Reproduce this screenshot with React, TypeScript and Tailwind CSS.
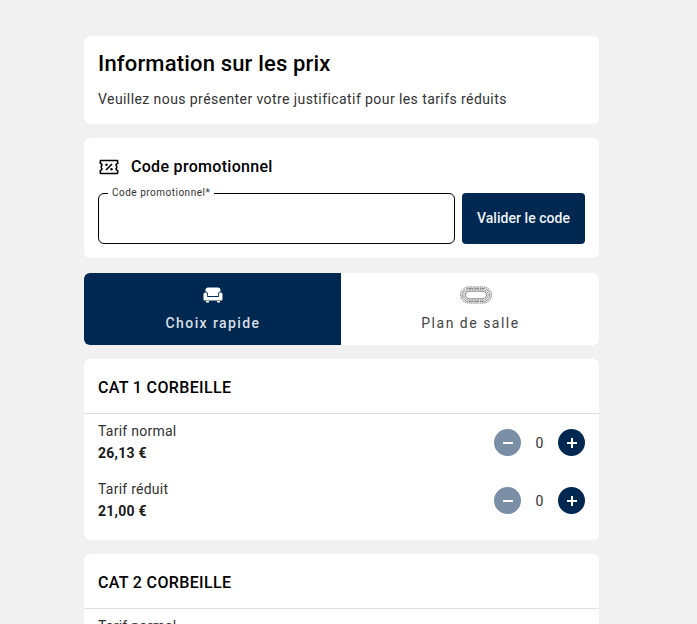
import React from 'react';

const Ticket = () => (
  <svg width="20" height="16" viewBox="0 0 20 16" fill="none" stroke="#000" strokeWidth="1.6">
    <path d="M1.500 1.500h17l.3 2.800c-1.200.4-1.800 1.200-1.800 1.900 1 .5 1 3.100 0 3.600 0 .7.600 1.500 1.800 1.900l-.3 2.800h-17l-.3-2.800c1.200-.4 1.800-1.200 1.800-1.900-1-.5-1-3.100 0-3.600 0-.7-.6-1.500-1.800-1.900z" strokeLinejoin="round" />
    <path d="M7 11l6-6" />
    <circle cx="7.500" cy="5.800" r="1.200" fill="#000" stroke="none" />
    <circle cx="12.500" cy="10.200" r="1.200" fill="#000" stroke="none" />
  </svg>
);

const Armchair = () => (
  <svg width="20" height="16" viewBox="0 0 20 16" fill="#fff">
    <path d="M5 .5h10c1.500 0 2.500 1 2.500 2.500v1.500c-1.500.2-2.500 1.400-2.500 2.800V9H5V7.300C5 5.900 4 4.700 2.500 4.500V3C2.500 1.500 3.500.5 5 .5z" />
    <path d="M.5 7.300C.5 6.100 1.500 5.500 2.500 5.500c1.200 0 1.700 1 1.700 2v2.500h11.600V7.500c0-1 .5-2 1.700-2 1 0 2 .6 2 1.800v5c0 .8-.6 1.300-1.300 1.300H1.800c-.7 0-1.300-.5-1.300-1.300z" />
    <rect x="3" y="14" width="3" height="1.500" />
    <rect x="14" y="14" width="3" height="1.500" />
  </svg>
);

const Stadium = () => (
  <svg width="32" height="18" viewBox="0 0 32 18" fill="none" stroke="#333" strokeWidth="0.6">
    <rect x="0.600" y="1" width="30.800" height="16" rx="8" strokeDasharray="1.600 0.600" />
    <rect x="2.200" y="2.400" width="27.600" height="13.200" rx="6.600" strokeDasharray="5 0.600" />
    <rect x="3.800" y="3.800" width="24.400" height="10.400" rx="5.200" strokeDasharray="2 0.600" />
    <rect x="5.400" y="5.200" width="21.200" height="7.600" rx="3.800" />
  </svg>
);

const Row = ({ label, price }: { label: string; price: string }) => (
  <div className="flex h-[58px] items-start justify-between">
    <div>
      <div className="text-sm leading-[20px] tracking-[0.25px] text-[#333]">{label}</div>
      <div className="mt-[1.500px] text-sm leading-[20px] font-bold tracking-[0.25px] text-[#1a1a1a]">{price}</div>
    </div>
    <div className="mt-[8px] flex items-center">
      <button className="flex h-[27px] w-[27px] items-center justify-center rounded-full bg-[#7a8fa6]">
        <span className="h-[2px] w-[10px] bg-white" />
      </button>
      <span className="w-[37px] text-center text-sm text-[#333]">0</span>
      <button className="relative flex h-[27px] w-[27px] items-center justify-center rounded-full bg-[#002851]">
        <span className="h-[2px] w-[10px] bg-white" />
        <span className="absolute h-[10px] w-[2px] bg-white" />
      </button>
    </div>
  </div>
);

const Category = ({ name, rows }: { name: string; rows: { label: string; price: string }[] }) => (
  <section className="mb-[14px] shrink-0 rounded-[6px] bg-white">
    <h3 className="flex h-[55px] items-center border-b border-[#e0e0e0] px-[14px] pt-[4px] text-base font-medium tracking-[0.35px] text-black">
      {name}
    </h3>
    <div className="px-[14px] pt-[7px] pb-[3px]">
      {rows.map((r) => (
        <Row key={r.label} label={r.label} price={r.price} />
      ))}
    </div>
  </section>
);

export default function App() {
  const rows = [
    { label: 'Tarif normal', price: '26,13 €' },
    { label: 'Tarif réduit', price: '21,00 €' },
  ];

  return (
    <div className="h-screen overflow-hidden bg-[#f1f1f1] pt-[36px] pl-[84px] font-['Roboto',sans-serif]">
      <div className="flex w-[515px] flex-col">
        <div className="mb-[14px] h-[88px] rounded-[6px] bg-white px-[14px] pt-[13px]">
          <h1 className="text-[22px] leading-[30px] font-medium tracking-[0.17px] text-black">Information sur les prix</h1>
          <p className="mt-[10px] text-sm leading-[20px] tracking-[0.42px] text-[#333]">
            Veuillez nous présenter votre justificatif pour les tarifs réduits
          </p>
        </div>

        <div className="mb-[15px] h-[120px] rounded-[6px] bg-white px-[14px] pt-[18px]">
          <div className="flex h-[22px] items-center gap-[12px] pl-[1px]">
            <Ticket />
            <h2 className="text-base font-medium tracking-[0.3px] text-black">Code promotionnel</h2>
          </div>
          <div className="mt-[15px] flex gap-[7px]">
            <fieldset className="-mt-[6px] h-[57px] flex-1 rounded-[6px] border border-black px-[9px]">
              <legend className="px-[4px] text-[10px] leading-[12px] tracking-[0.5px] text-[#333]">Code promotionnel*</legend>
            </fieldset>
            <button className="h-[51px] w-[123px] rounded-[4px] bg-[#002851] pb-[2px] text-sm font-medium tracking-[0.05px] text-[#eef1f5]">
              Valider le code
            </button>
          </div>
        </div>

        <div className="mb-[14px] flex h-[72px] overflow-hidden rounded-[6px] bg-white">
          <div className="flex w-[257px] flex-col items-center bg-[#002851] pt-[14px]">
            <Armchair />
            <span className="mt-[10px] ml-[1px] text-sm leading-[20px] font-medium tracking-[1.4px] text-[#d9dfe6]">Choix rapide</span>
          </div>
          <div className="flex flex-1 flex-col items-center pt-[13px]">
            <span className="ml-[12px]">
              <Stadium />
            </span>
            <span className="mt-[9px] ml-[1px] text-sm leading-[20px] tracking-[1.5px] text-[#444]">Plan de salle</span>
          </div>
        </div>

        <Category name="CAT 1 CORBEILLE" rows={rows} />
        <Category name="CAT 2 CORBEILLE" rows={rows} />
      </div>
    </div>
  );
}
